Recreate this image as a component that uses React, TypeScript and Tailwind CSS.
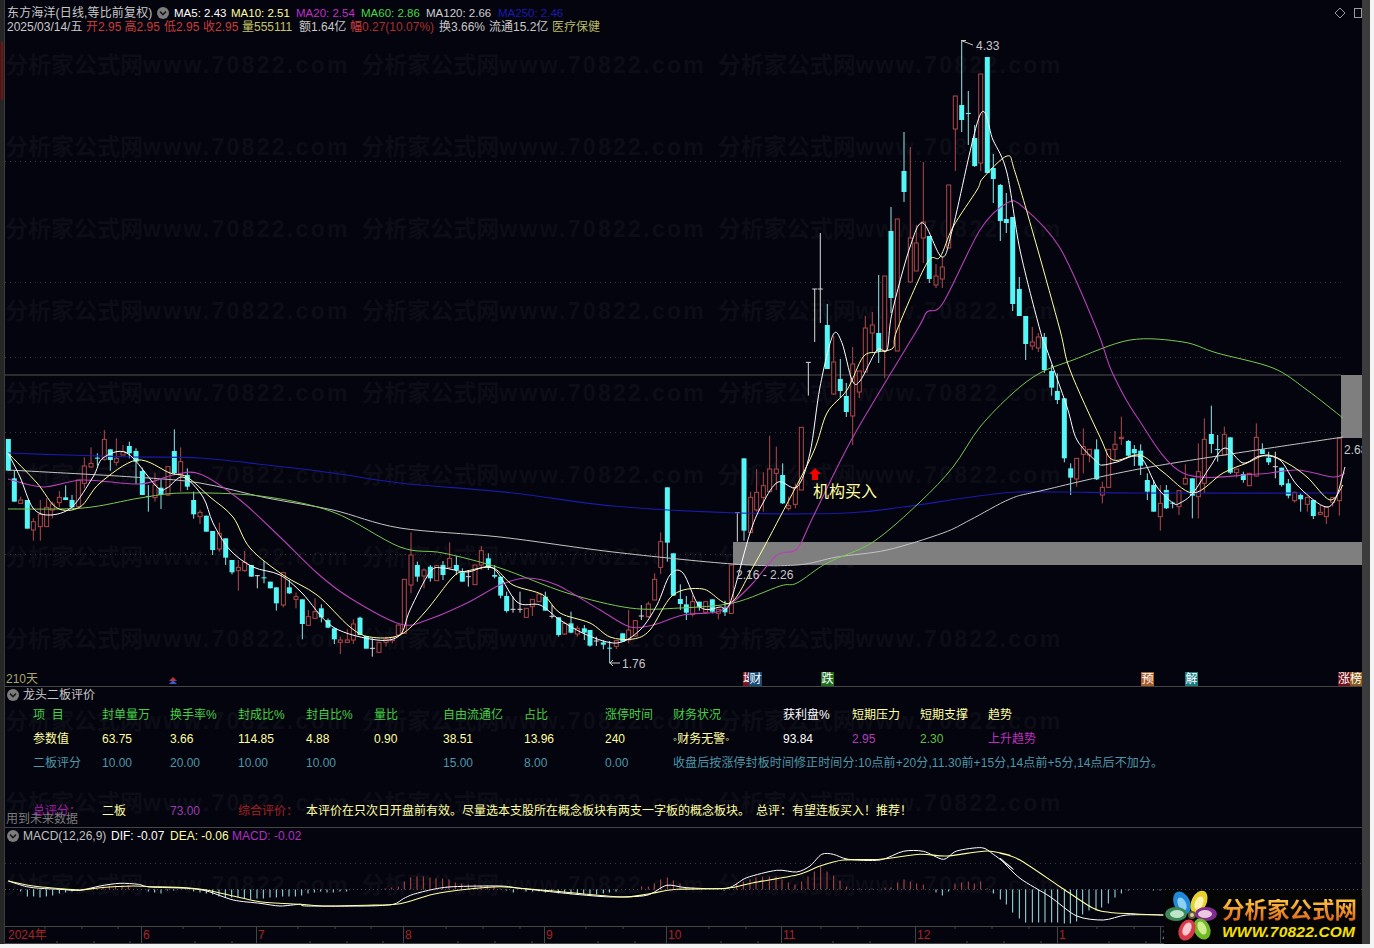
import React from "react";

type C = [number, number, number, number, number, number];
// zx, bodyTop, bodyBottom, wickTop, wickBottom, type (0 cyan, 1 red, 2 white)
const Z6: C[] = [
  [25,57,152,57,152,0],[43,175,245,150,245,0],[62,240,250,230,250,1],[82,240,326,240,326,0],[100,305,330,295,362,1],[121,283,320,240,362,1],[140,262,320,235,320,1],[157,252,270,245,295,1],[178,232,248,213,262,1],[197,232,240,196,240,0],[216,240,262,225,265,0],[235,180,260,180,265,1],[253,138,190,112,205,1],[273,130,141,82,143,1],[292,113,115,100,137,0],[313,58,118,30,122,1],[331,88,120,88,152,0],[349,115,127,55,137,1],[369,95,105,75,105,1],[388,78,100,65,115,0],[408,93,125,85,192,0],[427,153,225,143,225,0],[445,228,230,195,275,0],[465,195,233,158,245,1],[483,203,225,178,267,0],[504,140,225,140,228,1],[523,93,160,28,165,0],[542,125,165,82,215,1],[562,165,200,145,210,0],[581,240,283,215,296,0],[600,277,290,270,312,1],[619,287,335,287,335,0],[638,333,390,333,405,0],[658,340,387,308,395,1],[677,355,413,355,435,0],[696,420,457,420,463,0],[715,442,452,420,512,1],[734,427,452,393,455,1],[754,435,470,435,470,0],[772,467,468,465,505,2],[792,472,475,423,490,0],[811,485,505,485,505,0],[829,502,550,502,572,0],[850,458,555,455,562,1],[868,502,520,480,522,0],[888,530,538,518,565,1],[907,538,612,538,658,0],[925,590,616,570,616,1],[945,575,595,535,595,1],[964,565,592,553,607,0],[984,600,623,595,625,0],[1003,625,658,625,672,0],[1021,660,667,650,702,1],[1042,660,667,628,667,1],[1060,612,660,598,672,1],[1080,593,645,590,645,0],[1099,648,686,648,686,0],[1117,685,686,655,710,2],[1137,667,697,667,697,1],[1158,657,667,650,680,1],[1177,653,662,653,670,1],[1195,615,645,615,650,1],
];
const Z10: C[] = [
  [13,298,460,298,460,1],[33,225,315,157,340,1],[52,255,290,245,305,0],[72,270,288,265,325,1],[91,260,295,255,305,0],[110,257,302,255,302,1],[129,255,285,243,300,0],[149,235,263,187,265,1],[169,255,270,228,285,0],[187,277,305,265,305,0],[205,290,292,270,320,2],[225,255,314,255,314,1],[244,212,255,198,270,1],[265,235,262,220,270,0],[284,285,290,255,295,0],[302,290,347,290,355,0],[320,348,393,335,398,0],[339,388,389,350,398,2],[360,388,389,335,398,2],[379,385,412,385,412,1],[397,358,380,358,408,1],[417,342,365,342,365,1],[436,350,392,335,392,0],[456,409,410,375,415,2],[476,412,465,412,470,0],[494,430,462,425,465,1],[513,430,458,395,460,0],[532,445,462,437,470,1],[553,445,458,435,480,0],[570,450,497,450,500,0],[589,483,484,470,498,2],[610,487,494,480,508,0],[629,503,504,483,550,0],[649,482,499,480,507,1],[668,460,485,460,485,0],[686,450,480,390,490,1],[706,422,468,422,470,1],[724,408,409,375,420,2],[745,372,410,365,413,1],[764,298,360,280,360,1],[782,185,262,157,282,1],[802,22,188,22,245,0],[820,220,347,220,347,0],[841,357,372,313,390,0],[859,373,398,348,420,0],[878,365,403,345,410,1],[898,365,382,365,392,0],[917,365,397,365,400,1],[937,358,395,358,400,0],[955,388,400,388,418,1],[975,383,397,362,408,0],[994,255,400,255,400,1],
];
const Z8: C[] = [
  [52,578,579,578,665,2],[72,415,632,415,662,0],[92,532,637,515,637,1],[110,517,570,447,575,1],[130,497,532,457,575,1],[149,447,515,347,515,1],[169,447,460,380,510,1],[188,465,550,430,552,0],[206,557,565,530,572,1],[226,503,553,490,565,1],[244,322,510,322,510,1],[265,127,128,127,227,2],
];
// page coordinates
const P: C[] = [
  [814.7,289,290,289,342,2],[820.3,289,290,233,323,2],[827.3,325,369,304,369,0],[833.7,362,394,336,395,1],[840.3,379,391,359,398,0],[846.3,396,412,383,417,0],[852.7,364,416,347,445,1],[859.3,371,392,371,398,1],[865.3,328,372,316,372,1],[872.3,325,333,312,353,1],[878.7,333,351,275,363,0],[884.7,276,351,276,378,1],[891,231,298,207,313,0],[897.3,219,351,219,351,1],[904,171,192,132,202,0],[910.3,238,282,147,282,1],[916.3,243,271,225,271,1],[923.3,222,238,162,263,1],[929.3,236,279,236,283,0],[936,276,285,264,288,1],[942.3,267,279,257,288,1],[948.7,185,248,185,248,1],[955.3,96,129,96,171,1],[961.7,105,120,40,132,0],[968.3,113,114,91,145,0],[974.7,138,166,125,167,0],[980.7,74,163,74,171,1],[987.3,57,173,57,173,0],[993.3,168,179,154,203,0],[1000.3,185,221,184,241,0],[1006.3,219,223,193,233,0],[1012.7,217,304,217,311,0],[1019.3,289,316,277,316,0],[1025.7,316,344,316,360,0],[1032.3,342,346,327,350,1],[1038.3,337,348,333,352,1],[1044.3,337,370,333,373,0],
];
const Z9: C[] = [
  [35,123,173,105,197,0],[52,183,210,130,222,0],[73,205,385,205,397,0],[92,415,443,400,495,0],[110,385,447,385,470,1],[130,350,373,295,430,1],[148,358,375,358,397,1],[170,358,448,328,450,0],[187,472,495,455,520,1],[206,358,472,358,472,1],[225,343,358,303,390,1],[244,322,326,260,345,1],[265,333,377,330,380,0],[283,357,370,345,408,0],[302,362,407,343,435,0],[322,450,485,430,510,0],[341,465,545,450,545,0],[361,520,560,465,602,1],[379,480,535,465,537,0],[398,518,520,515,535,0],[417,482,530,480,555,1],[436,445,462,403,465,1],[457,445,497,445,565,0],[475,425,500,340,565,1],[493,328,460,265,490,1],[514,312,342,227,370,0],[533,357,360,315,395,0],[553,313,375,290,375,1],[571,322,428,322,432,0],[590,417,428,417,443,1],[610,432,450,425,458,0],[628,430,467,430,467,1],[649,322,438,280,440,1],[667,358,372,340,372,0],[686,383,397,365,405,0],[706,410,411,365,445,2],[725,413,465,413,470,0],[745,460,497,447,505,0],[764,487,512,485,518,1],[782,495,508,490,545,0],[802,502,523,500,545,1],[820,510,558,510,567,0],[841,547,553,525,553,1],[859,532,560,532,582,1],[878,503,517,503,530,1],[898,325,512,325,557,1],
];

const mapZ = (rows: C[], ox: number, oy: number): C[] =>
  rows.map(([x, a, b, c, d, t]) => [ox + x / 3, oy + a / 3, oy + b / 3, oy + c / 3, oy + d / 3, t]);

const candles: C[] = [...mapZ(Z6, 0, 420), ...mapZ(Z10, 400, 480), ...mapZ(Z8, 720, 320), ...P, ...mapZ(Z9, 1040, 330)];

// turns "x,y x,y" into a lightly smoothed curve
const smooth = (s: string, k = 0.16) => {
  const p = s.trim().split(/\s+/).map((q) => q.split(",").map(Number));
  let d = `M${p[0][0]} ${p[0][1]}`;
  for (let i = 0; i < p.length - 1; i++) {
    const a = p[Math.max(i - 1, 0)];
    const b = p[i];
    const c = p[i + 1];
    const e = p[Math.min(i + 2, p.length - 1)];
    const c1 = [b[0] + (c[0] - a[0]) * k, b[1] + (c[1] - a[1]) * k];
    const c2 = [c[0] - (e[0] - b[0]) * k, c[1] - (e[1] - b[1]) * k];
    d += ` C${c1[0].toFixed(1)} ${c1[1].toFixed(1)} ${c2[0].toFixed(1)} ${c2[1].toFixed(1)} ${c[0]} ${c[1]}`;
  }
  return d;
};

const MA250 = "8,453 67,455 133,457 200,458 267,465 333,473 400,483 513,493 613,506 738,513 847,513 903,507 1003,493 1060,492 1140,493 1340,493";
const MA120 = "8,470 133,477 200,483 267,498 333,510 400,528 500,537 613,552 733,564 797,565 837,557 887,550 943,533 970,520 1010,499 1040,491 1150,467 1343,437";
const MA60 = "8,509 83,508 140,498 183,493 260,496 333,512 400,547 443,553 500,568 567,593 630,608 680,608 733,603 780,586 797,583 827,563 873,542 920,502 953,467 980,427 1013,393 1040,373 1073,360 1130,340 1183,342 1217,353 1273,368 1307,390 1343,418";
const MA20 = "8,479 43,487 83,480 140,484 173,475 200,474 240,500 280,537 317,573 350,598 400,624 427,620 467,603 500,585 527,578 557,585 600,610 630,627 653,625 683,615 717,612 732,603 753,583 777,555 797,549 813,517 853,437 917,330 927,312 943,303 980,230 1007,203 1023,207 1060,248 1097,330 1112,372 1137,417 1183,473 1257,474 1297,470 1333,477 1345,473";
const MA10 = "8,453 37,483 57,508 80,507 100,483 137,460 170,473 187,477 210,497 233,517 250,548 283,575 317,595 350,627 370,637 400,635 425,612 453,577 467,571 493,568 513,585 543,595 560,613 590,623 610,637 633,639 650,630 673,595 703,589 730,603 753,567 780,517 813,453 827,413 847,390 863,357 877,352 893,348 897,330 927,263 940,257 953,227 977,190 983,178 1007,156 1015,172 1037,247 1060,330 1070,370 1100,437 1113,460 1140,455 1163,472 1193,493 1223,473 1247,463 1267,455 1287,463 1307,477 1330,500 1343,485";
const MA5 = "8,453 20,477 33,508 50,515 72,507 93,477 103,458 127,453 157,487 167,488 183,477 203,497 213,523 230,550 253,567 280,575 302,593 333,627 377,640 400,635 410,610 430,572 443,568 467,572 493,568 517,602 540,605 560,620 587,635 617,643 640,630 657,605 670,575 683,573 700,607 720,607 730,603 750,533 763,503 778,482 797,487 810,453 820,387 833,335 842,343 852,380 860,381 877,350 887,350 892,313 910,247 923,223 942,257 953,227 980,115 993,140 1007,173 1020,250 1040,330 1047,350 1067,407 1077,440 1097,462 1103,465 1117,462 1140,457 1157,487 1173,503 1180,503 1193,493 1210,467 1225,448 1243,463 1260,456 1280,460 1297,485 1323,506 1335,500 1345,467";

const conv = (pts: number[][], ox: number, oy: number) => pts.map(([x, y]) => `${(ox + x / 3).toFixed(1)},${(oy + y / 3).toFixed(1)}`).join(" ");
const DIF =
  conv([[25,165],[80,182],[120,187],[180,190],[240,193],[300,180],[360,172],[415,175],[450,183],[560,187],[620,195],[700,222],[780,232],[840,240],[900,235],[920,240],[1100,240],[1180,235],[1210,218],[1240,205],[1300,190],[1360,182],[1500,180],[1560,187]], 0, 826) + " " +
  conv([[100,198],[200,208],[280,213],[380,208],[440,178],[500,185],[620,187],[680,155],[770,133],[830,138],[870,120],[905,85],[940,85],[985,100],[1080,102],[1150,76],[1210,76],[1270,100],[1310,75],[1385,65],[1420,85],[1480,130]], 520, 826) + " " +
  conv([[0,25],[60,85],[150,140],[230,198],[310,210],[380,195],[490,195]], 1000, 850);
const DEA =
  conv([[25,165],[100,180],[180,188],[240,192],[300,185],[400,180],[450,182],[560,185],[620,192],[700,210],[780,227],[900,235],[980,240],[1100,238],[1200,233],[1300,205],[1400,190],[1500,182],[1560,187]], 0, 826) + " " +
  conv([[100,195],[200,205],[310,213],[380,205],[470,190],[620,187],[700,170],[830,147],[900,120],[970,102],[1080,100],[1200,85],[1280,90],[1400,75],[1470,88]], 520, 826) + " " +
  conv([[0,10],[60,30],[180,110],[280,175],[340,188],[490,195]], 1000, 850);

const barsA: number[][] = [[62,-2],[82,-7],[101,-7],[120,-8],[139,-7],[158,-6],[178,-4],[197,-3],[216,-2],[235,-1],[254,1],[273,1],[290,2],[309,3],[328,4],[347,4],[366,4],[385,4],[445,-2],[464,-3],[483,-4],[502,-1],[521,-1],[562,1],[581,-2],[600,-3],[619,-4],[638,-5],[657,-7],[676,-8],[695,-8],[714,-8],[733,-9],[752,-10],[771,-9],[790,-9],[810,-8],[829,-8],[848,-7],[867,-7],[886,-7],[905,-6],[924,-4],[943,-3],[962,-2],[981,-3],[1000,-3],[1020,-2],[1040,-2],[1155,1],[1175,2],[1195,3],[1213,8],[1232,12],[1251,13],[1270,13],[1290,12],[1308,11],[1328,11],[1347,10],[1366,7],[1385,6],[1405,5],[1425,5],[1443,4],[1462,4],[1482,3],[1500,1],[1520,-1],[1540,-3]];
const barsB: number[][] = [[18,-2],[38,-2],[57,-2],[76,-3],[95,-2],[115,-4],[134,-4],[153,-5],[172,-5],[191,-5],[210,-5],[230,-5],[250,-4],[268,-3],[288,-2],[365,3],[385,3],[403,6],[422,10],[442,12],[460,9],[480,6],[498,2],[517,1],[612,-1],[650,6],[670,8],[690,10],[708,12],[728,13],[748,13],[768,13],[786,10],[805,7],[825,5],[845,8],[864,13],[883,18],[902,23],[921,18],[941,14],[960,9],[980,3],[1018,1],[1056,1],[1095,2],[1113,2],[1133,7],[1152,10],[1171,8],[1190,6],[1210,5],[1248,-3],[1267,-6],[1286,-2],[1305,6],[1325,7],[1345,8],[1363,6],[1382,8],[1401,1],[1420,-4],[1441,-10],[1459,-15],[1478,-23],[1498,-29],[1517,-33],[1537,-33],[1556,-33]];
const barsC: number[][] = [[135,-33],[155,-33],[173,-33],[193,-34],[211,-34],[230,-32],[248,-25],[267,-21],[288,-21],[305,-18],[325,-14],[345,-8],[364,-4],[385,-1],[460,-1],[480,-1]];
const bars = [...barsA.map(([x, h]) => [x / 3, h]), ...barsB.map(([x, h]) => [520 + x / 3, h]), ...barsC.map(([x, h]) => [1000 + x / 3, h])];

const axisTicks = [40, 77, 113, 178, 215, 293, 330, 366, 441, 478, 515, 581, 618, 704, 741, 816, 853, 950, 987, 1024, 1092, 1129];

const Chevron = () => (
  <svg width="12" height="12" viewBox="0 0 12 12" className="shrink-0">
    <circle cx="6" cy="6" r="6" fill="#7c7c7c" />
    <path d="M3 4.6 L6 7.6 L9 4.6" fill="none" stroke="#1a1a1a" strokeWidth="1.5" />
  </svg>
);

const Row = ({ cells }: { cells: [string, string][] }) => (
  <>
    {cells.map(([t, c], i) => (
      <div key={i} className={c}>
        {t}
      </div>
    ))}
  </>
);

const G = "text-[#44d044]";
const Y = "text-[#ffffa0]";
const T = "text-[#4d97a8]";

export default function App() {
  const rows = Array.from({ length: 11 });
  return (
    <div className="relative flex h-[948px] w-[1374px] items-start overflow-hidden bg-[#f4f4f4] font-['Liberation_Sans','Noto_Sans_CJK_SC',sans-serif] text-[12px] leading-[14px] text-[#c8c8c8]">
      <div className="relative flex h-[944px] w-[1370px] bg-[#04040e]">
        {/* faint watermark behind everything */}
        <div className="pointer-events-none absolute left-0 top-0 grid w-[1074px] grid-cols-3 pl-[5px] pt-[24px] auto-rows-[82px]">
          {rows.map((_, r) =>
            [0, 1, 2].map((c) => (
              <div key={`${r}-${c}`} className="flex items-center whitespace-nowrap text-[23px] font-bold tracking-[2.3px] text-[#0c0d16]">
                <span className="tracking-[0px]">分析家公式网</span>www.70822.com
              </div>
            )),
          )}
        </div>

        {/* left rail */}
        <div className="relative w-[4px] shrink-0 bg-[#262626]">
          <div className="absolute left-[1px] top-[42px] h-[58px] w-[2px] bg-[#7a0f0f]" />
        </div>

        <div className="relative flex h-[944px] w-[1358px] flex-col border-l border-[#3c3c3c]">
          {/* main chart pane */}
          <div className="relative h-[686px] overflow-hidden">
            <svg className="absolute left-0 top-0 h-[686px] w-[1358px]" viewBox="5 0 1358 686" fill="none">
              {[161.5, 282.5, 357.5, 432.5, 554.5].map((y) => (
                <line key={y} x1="5" x2="1341" y1={y} y2={y} stroke="#3a3a3a" strokeDasharray="1 4" />
              ))}
              <rect x="733" y="542" width="629" height="23" fill="#7f7f7f" />
              <rect x="1341" y="375" width="21" height="63" fill="#7f7f7f" />
              <line x1="5" x2="1341" y1="375" y2="375" stroke="#505050" />
              {candles.map(([x, a, b, c, d, t], i) => {
                const color = t === 0 ? "#54f7f7" : t === 1 ? "#b24a4a" : "#d8d8d8";
                const wick = t === 0 ? "#8fe8e8" : color;
                const h = Math.max(b - a, 1);
                return (
                  <g key={i}>
                    <line x1={x} x2={x} y1={c} y2={d} stroke={wick} />
                    {t === 0 ? (
                      <rect x={x - 2.5} y={a} width="5" height={h} fill={color} />
                    ) : t === 1 ? (
                      <rect x={x - 2} y={a} width="4" height={h} fill="#04040e" stroke={color} />
                    ) : (
                      <line x1={x - 2.5} x2={x + 2.5} y1={a} y2={a} stroke={color} />
                    )}
                  </g>
                );
              })}
              <path d={smooth(MA250)} stroke="#1a1aa8" strokeWidth="1.2" />
              <path d={smooth(MA120)} stroke="#c4c4c4" strokeWidth="1" />
              <path d={smooth(MA60)} stroke="#78c850" strokeWidth="1" />
              <path d={smooth(MA20)} stroke="#b840b8" strokeWidth="1.1" />
              <path d={smooth(MA10)} stroke="#ffffa0" strokeWidth="1" />
              <path d={smooth(MA5)} stroke="#ffffff" strokeWidth="1" />
              <path d="M961 40.5 H966 M961 40.5 L973 45" stroke="#c8c8c8" />
              <path d="M610 663 H620 M610 663 L613 660 M610 663 L613 666" stroke="#c8c8c8" />
              <polygon points="815,468 821,474 818,474 818,480 812,480 812,474 809,474" fill="#f00000" />
              <polygon points="173,677 177,681 169,681" fill="#c03030" />
              <polygon points="173,680 177,684 169,684" fill="#3060d0" />
            </svg>

            {/* legend */}
            <div className="relative flex whitespace-nowrap pl-[2px] pt-[6px]">
              <span className="w-[150px] tracking-[0.15px]">东方海洋(日线,等比前复权)</span>
              <span className="flex w-[17px] items-center"><Chevron /></span>
              <span className="w-[57px] text-[11.5px] text-white">MA5: 2.43</span>
              <span className="w-[65px] text-[11.5px] text-[#ffffa0]">MA10: 2.51</span>
              <span className="w-[65px] text-[11.5px] text-[#c030c8]">MA20: 2.54</span>
              <span className="w-[65px] text-[11.5px] text-[#44d844]">MA60: 2.86</span>
              <span className="w-[72px] text-[11.5px] text-[#d0d0d0]">MA120: 2.66</span>
              <span className="w-[66px] text-[11.5px] text-[#1a1ab0]">MA250: 2.46</span>
            </div>
            <div className="relative flex whitespace-nowrap pl-[2px]">
              <span className="w-[79px]">2025/03/14/五</span>
              <span className="w-[38.5px] text-[#c83c3c]">开2.95</span>
              <span className="w-[39.5px] text-[#c83c3c]">高2.95</span>
              <span className="w-[39px] text-[#c83c3c]">低2.95</span>
              <span className="w-[39px] text-[#c83c3c]">收2.95</span>
              <span className="w-[57px] text-[#c4c468]">量555111</span>
              <span className="w-[51px]">额1.64亿</span>
              <span className="w-[89px] text-[#a83030]"><span className="text-[#d84040]">幅</span>0.27(10.07%)</span>
              <span className="w-[50px]">换3.66%</span>
              <span className="w-[63px]">流通15.2亿</span>
              <span className="text-[#b8b864]">医疗保健</span>
            </div>

            {/* chart annotations */}
            <span className="absolute left-[971px] top-[39px]">4.33</span>
            <span className="absolute left-[617px] top-[657px]">1.76</span>
            <span className="absolute left-[731px] top-[568px] text-[#c8c8c8]">2.16 - 2.26</span>
            <span className="absolute left-[1339px] top-[443px]">2.68</span>
            <span className="absolute left-[808px] top-[484px] text-[16px] leading-[16px] text-[#ffffa0]">机构买入</span>
            <span className="absolute left-[1px] top-[672px] text-[#a8a46c]">210天</span>
            <span className="absolute left-[738px] top-[672px] h-[14px] w-[6px] overflow-hidden bg-[#7a1420] text-white">坳</span>
            <span className="absolute left-[744px] top-[672px] h-[14px] w-[13px] bg-[#124a78] text-center text-white">财</span>
            <span className="absolute left-[816px] top-[672px] h-[14px] w-[13px] bg-[#1c6e1c] text-center text-white">跌</span>
            <span className="absolute left-[1136px] top-[672px] h-[14px] w-[13px] bg-[#a85c28] text-center text-white">预</span>
            <span className="absolute left-[1180px] top-[672px] h-[14px] w-[13px] bg-[#1a7c80] text-center text-white">解</span>
            <span className="absolute left-[1333px] top-[672px] h-[14px] w-[12px] overflow-hidden bg-[#701018] text-center text-white">涨</span>
            <span className="absolute left-[1345px] top-[672px] h-[14px] w-[12px] overflow-hidden bg-[#8a5a1c] text-center text-white">榜</span>
            <svg className="absolute left-[1330px] top-[7px]" width="28" height="12" viewBox="0 0 28 12" fill="none" stroke="#9a9a9a">
              <path d="M5 1 L10 6 L5 11 L0 6 Z" />
              <rect x="19.5" y="1.5" width="7" height="9" />
            </svg>
          </div>

          {/* formula table pane */}
          <div className="relative h-[141px] border-t border-[#444444]">
            <div className="flex h-[16px] items-center gap-[4px] pl-[2px]">
              <Chevron />
              <span>龙头二板评价</span>
            </div>
            <div className="grid auto-rows-[24px] grid-cols-[69px_68px_68px_68px_68px_69px_81px_81px_68px_110px_69px_68px_68px_1fr] items-center whitespace-nowrap pl-[28px]">
              <Row
                cells={[
                  ["项  目", G + " whitespace-pre"],["封单量万", G],["换手率%", G],["封成比%", G],["封自比%", G],["量比", G],["自由流通亿", G],["占比", G],["涨停时间", G],["财务状况", G],["获利盘%", "text-white"],["短期压力", Y],["短期支撑", Y],["趋势", Y],
                ]}
              />
              <Row
                cells={[
                  ["参数值", Y],["63.75", Y],["3.66", Y],["114.85", Y],["4.88", Y],["0.90", Y],["38.51", Y],["13.96", Y],["240", Y],["◦财务无警◦", Y],["93.84", "text-white"],["2.95", "text-[#b040b8]"],["2.30", "text-[#60c040]"],["上升趋势", "text-[#c030c0]"],
                ]}
              />
              <Row
                cells={[
                  ["二板评分", T],["10.00", T],["20.00", T],["10.00", T],["10.00", T],["", T],["15.00", T],["8.00", T],["0.00", T],
                  ["收盘后按涨停封板时间修正时间分:10点前+20分,11.30前+15分,14点前+5分,14点后不加分。", T + " col-span-5 tracking-[0.1px]"],
                ]}
              />
              <div className="col-span-14" />
              <Row
                cells={[
                  ["总评分：", "text-[#a020a8]"],["二板", Y],["73.00", "text-[#9a3cb0]"],["综合评价：", "text-[#a82020]"],
                  ["本评价在只次日开盘前有效。尽量选本支股所在概念板块有两支一字板的概念板块。　总评：有望连板买入！推荐！", Y + " col-span-10"],
                ]}
              />
            </div>
            <span className="absolute left-[1px] top-[125px] text-[#7c7c7c]">用到未来数据</span>
          </div>

          {/* MACD pane */}
          <div className="relative h-[99px] overflow-hidden border-t border-[#444444]">
            <svg className="absolute left-0 top-0 h-[99px] w-[1358px]" viewBox="5 828 1358 99" fill="none">
              <line x1="5" x2="1362" y1="863.5" y2="863.5" stroke="#3a3a3a" strokeDasharray="1 4" />
              <line x1="5" x2="1362" y1="889.5" y2="889.5" stroke="#4a4a4a" strokeDasharray="1 3" />
              {bars.map(([x, h], i) => (
                <line key={i} x1={x} x2={x} y1="889.5" y2={889.5 - h} stroke={h > 0 ? "#b84c4c" : "#a4e8e8"} />
              ))}
              <path d={smooth(DIF, 0.14)} stroke="#ffffff" />
              <path d={smooth(DEA, 0.14)} stroke="#ffffa0" strokeWidth="1.1" />
            </svg>
            <div className="relative flex h-[16px] items-center whitespace-nowrap pl-[2px]">
              <Chevron />
              <span className="ml-[4px] w-[88px] text-[#c0c0c0]">MACD(12,26,9)</span>
              <span className="w-[59px] text-white">DIF: -0.07</span>
              <span className="w-[62px] text-[#ffffa0]">DEA: -0.06</span>
              <span className="text-[#b030c0]">MACD: -0.02</span>
            </div>
          </div>

          {/* date axis */}
          <div className="relative flex h-[18px] items-center border-y border-[#444444] leading-[16px] text-[#a82424]">
            <svg className="absolute left-0 top-0 h-[16px] w-[1358px]" viewBox="0 0 1358 16" fill="none" stroke="#444444">
              {axisTicks.map((x) => (
                <path key={x} d={`M${x} 0 V2 M${x + 12} 14 V16`} />
              ))}
            </svg>
            {([["2024年", 136], ["6", 115], ["7", 147], ["8", 141], ["9", 122], ["10", 115], ["11", 134], ["12", 142], ["1", 103]] as [string, number][]).map(([t, w], i) => (
              <span key={i} style={{ width: w }} className={"h-full " + (i ? "border-l border-[#444444] pl-[1px]" : "pl-[3px]")}>
                {t}
              </span>
            ))}
            <span className="h-full flex-1 border-l border-[#444444] pl-[1px] text-[#777777]">2</span>
          </div>
        </div>

        {/* right rail */}
        <div className="w-[8px] shrink-0 bg-[#3c3c3c]" />

        {/* site logo stamp */}
        <div className="absolute left-[1164px] top-[890px] flex h-[54px] w-[198px] items-center bg-[#050505]">
          <svg className="absolute left-0 top-0" width="60" height="54" viewBox="1164 890 60 54">
            <ellipse cx="1182" cy="903" rx="8" ry="12" transform="rotate(-25 1182 903)" fill="#2088d8" />
            <ellipse cx="1182" cy="904" rx="4" ry="7" transform="rotate(-25 1182 904)" fill="#8cd0f4" />
            <ellipse cx="1199" cy="902" rx="7.5" ry="12" transform="rotate(25 1199 902)" fill="#e8d030" />
            <ellipse cx="1199" cy="903" rx="4" ry="7" transform="rotate(25 1199 903)" fill="#faf4b0" />
            <ellipse cx="1206" cy="914" rx="11" ry="7" fill="#802c90" />
            <ellipse cx="1205" cy="914" rx="7" ry="4" fill="#ecc8e0" />
            <ellipse cx="1202" cy="929" rx="8" ry="11" transform="rotate(-25 1202 929)" fill="#70b828" />
            <ellipse cx="1202" cy="928" rx="4" ry="7" transform="rotate(-25 1202 928)" fill="#d0ec90" />
            <ellipse cx="1187" cy="930" rx="8" ry="11" transform="rotate(25 1187 930)" fill="#d83848" />
            <ellipse cx="1187" cy="929" rx="4" ry="7" transform="rotate(25 1187 929)" fill="#f8c8d0" />
            <ellipse cx="1176" cy="914" rx="11" ry="7" fill="#3c8a58" />
            <ellipse cx="1177" cy="914" rx="7" ry="4" fill="#c0e4c8" />
            <circle cx="1192" cy="915" r="4" fill="#605838" />
            <circle cx="1192" cy="915" r="2" fill="#d8d0a0" />
          </svg>
          <div className="ml-[58px] mt-[3px] flex flex-col gap-[2px] whitespace-nowrap">
            <span className="bg-linear-to-b from-[#ffc840] to-[#d85810] bg-clip-text text-[22.5px] font-bold leading-[24px] text-transparent">分析家公式网</span>
            <span className="text-[15.5px] font-bold italic leading-[14px] tracking-[0.2px] text-[#f4e000]">WWW.70822.COM</span>
          </div>
        </div>
      </div>
    </div>
  );
}
